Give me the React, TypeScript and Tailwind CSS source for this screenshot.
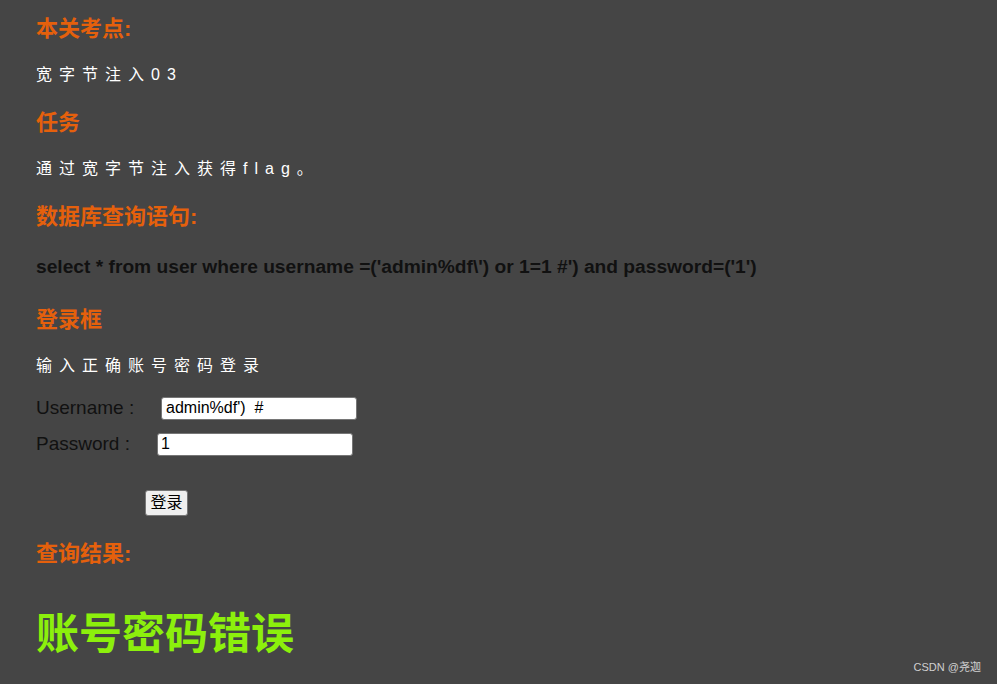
import React from 'react';

const font = 'font-["Liberation_Sans","Noto_Sans_CJK_SC",sans-serif]';

const Heading = ({ children, mt }: { children: React.ReactNode; mt: string }) => (
  <div className={`h-[24px] flex items-center text-[22px] font-bold text-[#e5600c] ${mt}`}>{children}</div>
);

const Line = ({ children, mt }: { children: React.ReactNode; mt: string }) => (
  <div className={`h-[24px] flex items-center text-[16px] text-white tracking-[7px] ${mt}`}>{children}</div>
);

const App = () => {
  return (
    <div className={`relative w-[997px] h-[684px] bg-[#454545] overflow-hidden ${font}`}>
      <div className="flex flex-col pl-[36px] pt-[16px]">
        <Heading mt="mt-0">本关考点:</Heading>
        <Line mt="mt-[23px]">宽字节注入03</Line>
        <Heading mt="mt-[23px]">任务</Heading>
        <Line mt="mt-[23px]">通过宽字节注入获得flag。</Line>
        <Heading mt="mt-[23px]">数据库查询语句:</Heading>
        <div className="h-[24px] mt-[27px] flex items-center text-[19.2px] font-bold text-[#111]">
          select * from user where username =('admin%df\') or 1=1 #') and password=('1')
        </div>
        <Heading mt="mt-[28px]">登录框</Heading>
        <Line mt="mt-[23px]">输入正确账号密码登录</Line>

        <div className="h-[24px] mt-[18px] flex items-center text-[19px] text-[#111]">
          <span className="w-[125px]">Username :</span>
          <input
            className="w-[196px] h-[23px] bg-white border border-[#767676] rounded-[3px] px-[4px] text-[16px] text-black outline-none"
            defaultValue="admin%df')  #"
          />
        </div>
        <div className="h-[24px] mt-[12px] flex items-center text-[19px] text-[#111]">
          <span className="w-[121px]">Password :</span>
          <input
            className="w-[196px] h-[23px] bg-white border border-[#767676] rounded-[3px] px-[3px] text-[16px] text-black outline-none"
            defaultValue="1"
          />
        </div>

        <div className="mt-[34px] h-[26px] pl-[109px] flex">
          <button className="w-[43px] h-[26px] bg-[#efefef] border border-[#767676] rounded-[3px] text-[16px] text-black flex items-center justify-center">
            登录
          </button>
        </div>

        <Heading mt="mt-[25px]">查询结果:</Heading>
        <div className="h-[50px] mt-[44px] flex items-center text-[43px] font-bold text-[#8cf00c]">账号密码错误</div>
      </div>

      <div className="absolute right-[16px] bottom-[9px] text-[11px] text-[#d0d0d0]">CSDN @尧迦</div>
    </div>
  );
};

export default App;
